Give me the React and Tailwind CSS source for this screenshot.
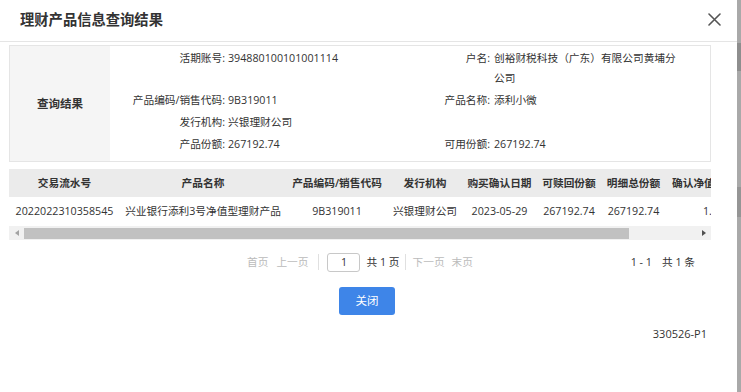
import React from "react";

const cols = [
  { w: 111, h: "交易流水号", d: "2022022310358545" },
  { w: 166, h: "产品名称", d: "兴业银行添利3号净值型理财产品" },
  { w: 102, h: "产品编码/销售代码", d: "9B319011" },
  { w: 74, h: "发行机构", d: "兴银理财公司" },
  { w: 75, h: "购买确认日期", d: "2023-05-29" },
  { w: 64, h: "可赎回份额", d: "267192.74" },
  { w: 65, h: "明细总份额", d: "267192.74" },
];

function InfoRow({ l1, v1, l2, v2 }) {
  return (
    <div className="flex items-start py-[1px] leading-[20px]">
      <div className="w-[115px] shrink-0 text-right text-[#333]">{l1}</div>
      <div className="w-[184px] shrink-0 pl-[3px] text-[#333]">{v1}</div>
      <div className="w-[81px] shrink-0 text-right text-[#333]">{l2}</div>
      <div className="w-[196px] shrink-0 pl-[4px] text-[#333]">{v2}</div>
    </div>
  );
}

export default function App() {
  return (
    <div className="flex w-[741px] h-[392px] overflow-hidden bg-white font-['Open_Sans','Noto_Sans_CJK_SC',sans-serif] text-[10.7px] text-[#333]">
      <div className="w-[737px] shrink-0 flex flex-col bg-white">
        {/* header */}
        <div className="h-[42px] shrink-0 flex items-center justify-between border-b border-[#e5e5e5] pl-[20px] pr-[16px]">
          <div className="text-[14.3px] font-semibold text-[#333] -mt-[1px]">理财产品信息查询结果</div>
          <svg width="13" height="13" viewBox="0 0 13 13" className="-mt-[3px]">
            <path d="M1 1 L12 12 M12 1 L1 12" stroke="#555" strokeWidth="1.6" strokeLinecap="round" />
          </svg>
        </div>

        {/* info box */}
        <div className="ml-[9px] mt-[3px] w-[702px] h-[117px] flex border border-[#e5e5e5]">
          <div className="w-[100px] shrink-0 bg-[#f5f5f5] flex items-center justify-center font-semibold text-[11.5px] text-[#333]">
            查询结果
          </div>
          <div className="flex flex-col pt-[1px]">
            <InfoRow l1="活期账号:" v1="394880100101001114" l2="户名:" v2="创裕财税科技（广东）有限公司黄埔分公司" />
            <InfoRow l1="产品编码/销售代码:" v1="9B319011" l2="产品名称:" v2="添利小微" />
            <InfoRow l1="发行机构:" v1="兴银理财公司" l2="" v2="" />
            <InfoRow l1="产品份额:" v1="267192.74" l2="可用份额:" v2="267192.74" />
          </div>
        </div>

        {/* table */}
        <div className="ml-[9px] mt-[7px] w-[702px] overflow-hidden">
          <div className="flex w-[760px] h-[28px] bg-[#ebebeb] items-center font-semibold text-[#333]">
            {cols.map((c) => (
              <div key={c.h} style={{ width: c.w }} className="shrink-0 text-center whitespace-nowrap">
                {c.h}
              </div>
            ))}
            <div className="w-[80px] shrink-0 pl-[6px] whitespace-nowrap">确认净值</div>
          </div>
          <div className="flex w-[760px] h-[29px] items-center text-[#333]">
            {cols.map((c) => (
              <div key={c.h} style={{ width: c.w }} className="shrink-0 text-center whitespace-nowrap">
                {c.d}
              </div>
            ))}
            <div className="w-[80px] shrink-0 pl-[37px] whitespace-nowrap">1.0000</div>
          </div>
          {/* scrollbar */}
          <div className="flex items-center h-[14px] w-[702px] bg-[#f1f1f1]">
            <div className="w-[15px] shrink-0 flex items-center justify-center">
              <svg width="4" height="6" viewBox="0 0 4 6"><path d="M4 0 L0 3 L4 6 Z" fill="#a3a3a3" /></svg>
            </div>
            <div className="w-[605px] h-[11px] bg-[#c1c1c1]" />
            <div className="flex-1" />
            <div className="w-[15px] shrink-0 flex items-center justify-center">
              <svg width="4" height="6" viewBox="0 0 4 6"><path d="M0 0 L4 3 L0 6 Z" fill="#505050" /></svg>
            </div>
          </div>
        </div>

        {/* pagination */}
        <div className="mt-[11px] h-[22px] flex items-center">
          <div className="pl-[247px] flex items-center">
            <span className="text-[#bbb]">首页</span>
            <span className="ml-[8px] text-[#bbb]">上一页</span>
            <span className="ml-[10px] w-px h-[16px] bg-[#e0e0e0]" />
            <span className="ml-[8px] w-[33px] h-[19px] border border-[#c8c8c8] rounded-[3px] flex items-center justify-center text-[#333]">1</span>
            <span className="ml-[6px] text-[#333]">共 1 页</span>
            <span className="ml-[5px] w-px h-[16px] bg-[#e0e0e0]" />
            <span className="ml-[7px] text-[#bbb]">下一页</span>
            <span className="ml-[7px] text-[#bbb]">末页</span>
          </div>
          <div className="ml-auto pr-[42px] flex items-center text-[#333]">
            <span className="whitespace-pre">1 - 1</span>
            <span className="ml-[10px]">共 1 条</span>
          </div>
        </div>

        {/* button */}
        <div className="mt-[14px] flex">
          <div className="ml-[339px] w-[56px] h-[28px] rounded-[3px] bg-[#3e85e8] flex items-center justify-center text-white text-[11.5px]">
            关闭
          </div>
        </div>

        <div className="mt-[11px] pr-[30px] text-right text-[11px] text-[#333]">330526-P1</div>
      </div>
      <div className="w-[4px] shrink-0 flex flex-col bg-[#a9a9a9]">
        <div className="h-[43px]" />
        <div className="h-[28px] bg-[#8e8e8e]" />
        <div className="h-[116px]" />
        <div className="h-[30px] bg-[#959595]" />
      </div>
    </div>
  );
}
